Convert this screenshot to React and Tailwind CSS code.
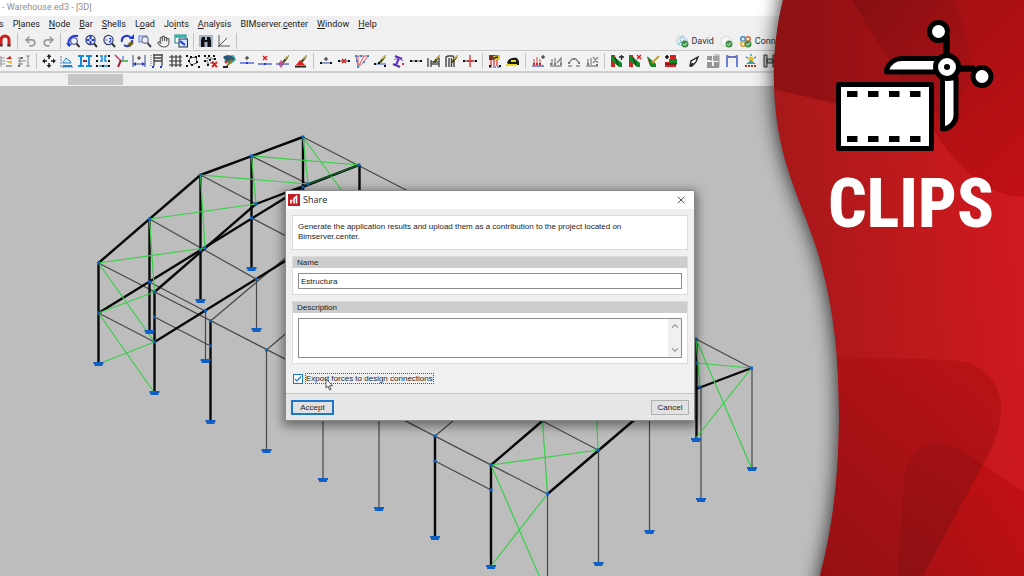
import React from 'react';
import { ChevronDown, ChevronUp, Hand, Redo2, Undo2, X } from 'lucide-react';

const MENU = [
  ['', '', 's'],
  ['P', 'l', 'anes'],
  ['', 'N', 'ode'],
  ['', 'B', 'ar'],
  ['', 'S', 'hells'],
  ['L', 'o', 'ad'],
  ['Jo', 'i', 'nts'],
  ['', 'A', 'nalysis'],
  ['BIMserver.', 'c', 'enter'],
  ['', 'W', 'indow'],
  ['', 'H', 'elp'],
];

// Small reusable bits of the toolbar drawings
const Pencil = () => (
  <>
    <path d="M6 8L10 3L13 1L12 4L8 9Z" fill="#3f4a14" />
    <path d="M9 5L12 2" stroke="#d8c060" strokeWidth="1.4" />
  </>
);
const Cross = ({ x, y }) => (
  <path d={`M${x} ${y}l4 4m0 -4l-4 4`} stroke="#e01818" strokeWidth="1.4" />
);
const Dots = ({ points, color = '#111' }) =>
  points.map(([x, y]) => <rect key={`${x}-${y}`} x={x - 1} y={y - 1} width="2" height="2" fill={color} stroke="none" />);
const Lens = () => (
  <>
    <circle cx="6.5" cy="6" r="4.6" fill="#e8eefc" stroke="#333f66" strokeWidth="1.2" />
    <path d="M10 9.5L13 13" stroke="#333" strokeWidth="2" />
  </>
);

const ICONS = {
  magnet: (
    <>
      <path d="M3 12V6a4 4 0 0 1 8 0v6" stroke="#d01c1c" strokeWidth="3" />
      <path d="M1.5 11.5h3M9.5 11.5h3" stroke="#333" strokeWidth="2" />
    </>
  ),
  zoomPrev: (
    <>
      <path d="M3 12C1 4 6 1 12 2" stroke="#2238d8" strokeWidth="2" />
      <circle cx="8" cy="7" r="3.4" fill="#e8eefc" stroke="#333f66" />
      <path d="M10.5 9.5L13.5 13" stroke="#333" strokeWidth="2" />
      <path d="M0 9l3 4 3-3z" fill="#2238d8" />
    </>
  ),
  zoomAll: (
    <>
      <Lens />
      <path d="M6.5 2v3M6.5 7v3M2.5 6h3M7.5 6h3" stroke="#2238d8" strokeWidth="2" />
    </>
  ),
  zoomTwo: (
    <>
      <Lens />
      <path d="M3.5 6h2M7 4.5h2V6L7 8h2.5" stroke="#2238d8" />
    </>
  ),
  redraw: (
    <>
      <path d="M2 8a5 5 0 0 1 9-4M12 6a5 5 0 0 1-8 5" stroke="#2238d8" strokeWidth="2" />
      <path d="M9 5h5V0z" fill="#2238d8" />
      <path d="M7 11l4-4 3 2-4 4z" fill="#70641c" />
    </>
  ),
  zoomWin: (
    <>
      <rect x="1" y="2" width="8" height="6" fill="#dce6ff" stroke="#5878d8" />
      <circle cx="7" cy="6" r="3.4" fill="#e8eefc" stroke="#556" />
      <path d="M9.5 9L13 13" stroke="#445" strokeWidth="2" />
    </>
  ),
  windows: (
    <>
      <rect x="1" y="1" width="11" height="8" fill="#fff" stroke="#168080" />
      <path d="M1 2.5h11" stroke="#20b0b0" strokeWidth="2.5" />
      <rect x="5" y="5" width="8.5" height="8" fill="#cfe4ff" stroke="#234" />
      <path d="M6 7l5 4" stroke="#2238d8" strokeWidth="2" />
    </>
  ),
  binoculars: (
    <>
      <rect x="0" y="1" width="14" height="12" fill="#a8b4c8" />
      <path d="M2 13V6l1-3h3v3h2V3h3l1 3v7H8.5V8h-3v5z" fill="#111" />
    </>
  ),
  angle: <path d="M2 1v12M1 12h12M2 12L10 4" stroke="#555" />,
  layersRed: (
    <>
      <path d="M0 4h6M0 7h6M0 10h6M2 2v11" stroke="#999" />
      <path d="M7 5l4-3 2 3z" fill="#e02020" />
      <path d="M6 7h7v3l-3-1z" fill="#f0c020" />
      <path d="M7 12h6" stroke="#555" />
    </>
  ),
  layersGray: (
    <>
      <path d="M1 4h5M1 7h5M1 10h5M3 3v9M6 7h3M9 2h4M9 12h4M11 2v10" stroke="#888" />
      <Dots points={[[2, 12], [5, 4]]} color="#666" />
    </>
  ),
  move: (
    <>
      <path d="M7 3v2M7 9v2M3 7h2M9 7h2" stroke="#222" strokeWidth="1.6" />
      <path d="M7 0l2.5 3h-5zM7 14l2.5-3h-5zM0 7l3-2.5v5zM14 7l-3-2.5v5z" fill="#222" />
    </>
  ),
  section1: (
    <>
      <path d="M1 2v11h12" stroke="#5b7ba8" strokeDasharray="2 1" />
      <path d="M3 9c0-3 2-2 3-5 1 2 5 2 5 5z" fill="#d8eefa" stroke="#2080c8" />
      <path d="M3 12h9" stroke="#2080c8" strokeWidth="2" />
    </>
  ),
  section2: (
    <>
      <path d="M0 2h6M0 12h6M3 2v10M8 2h6M8 12h6M11 2v10" stroke="#168cd8" strokeWidth="2" />
      <path d="M5 7h4" stroke="#2238b8" strokeWidth="2" />
      <Dots points={[[7, 7]]} color="#d02020" />
    </>
  ),
  section3: (
    <>
      <path d="M4 2h2v5H4M11 2H9v5h2M3 12h9" stroke="#168cd8" strokeWidth="1.5" />
      <Dots points={[[1, 2], [1, 7], [1, 12], [13, 2], [13, 7], [13, 12], [7, 12]]} />
    </>
  ),
  axes: (
    <>
      <path d="M1 1l6 6" stroke="#d04060" strokeWidth="1.5" />
      <path d="M6 7h8" stroke="#30a840" strokeWidth="1.5" />
      <path d="M7 6L4 13" stroke="#a02838" strokeWidth="2" />
      <path d="M9 2v4" stroke="#4058d8" />
    </>
  ),
  dimension: (
    <>
      <path d="M1 1v12M13 1v12M1 10h12" stroke="#384880" />
      <path d="M5 4h4M7 2v4" stroke="#333" />
      <path d="M1 10l3-2v4zM13 10l-3-2v4z" fill="#2238d8" />
    </>
  ),
  frame: (
    <>
      <path d="M3 1h10M4 1v11M12 1v11M4 4h8M4 7h8" stroke="#444" strokeWidth="1.3" />
      <Dots points={[[3, 13], [11, 13]]} color="#2238d8" />
      <path d="M1 1v11" stroke="#777" strokeDasharray="1 1" />
    </>
  ),
  grid: <path d="M4 1v12M8 1v12M12 1v12M1 3h13M1 7h13M1 11h13" stroke="#333" strokeWidth="1.2" />,
  nodesA: (
    <>
      <path d="M4 4l6-1 1 6-6 2-2-4z" stroke="#555" />
      <Dots points={[[1, 2], [5, 3], [10, 3], [13, 2], [3, 7], [11, 8], [1, 12], [6, 11], [13, 13]]} />
    </>
  ),
  nodesX: (
    <>
      <path d="M3 4h6v5H3z" stroke="#555" strokeDasharray="2 1" />
      <Dots points={[[1, 2], [5, 2], [10, 2], [1, 7], [6, 6], [11, 5], [4, 11]]} />
      <path d="M8 8l5 5m0-5l-5 5" stroke="#e01818" strokeWidth="1.8" />
    </>
  ),
  globe: (
    <>
      <path d="M2 2l10-1 2 5-5 4-6-2z" fill="#40b8a8" />
      <path d="M1 3c4-3 9-2 12 2l-4 3-5-1z" fill="#2c5878" />
      <path d="M4 12l5-7 2 2-6 6z" fill="#8a7c20" />
      <circle cx="4" cy="8" r="1.5" fill="#d03030" />
      <path d="M1 13h5" stroke="#222" strokeWidth="2" />
    </>
  ),
  barNode: (
    <>
      <path d="M0 9h14" stroke="#4864d8" strokeWidth="1.4" />
      <path d="M5 4h4M7 2v4" stroke="#222" />
      <Dots points={[[7, 9]]} color="#2238d8" />
    </>
  ),
  barNodeX: (
    <>
      <path d="M0 10h14" stroke="#4864d8" strokeWidth="1.4" />
      <Cross x={5} y={2} />
      <Dots points={[[7, 10]]} color="#2238d8" />
    </>
  ),
  barNodeEdit: (
    <>
      <path d="M0 10h13" stroke="#4864d8" strokeWidth="1.4" />
      <Pencil />
      <circle cx="5" cy="10" r="2" stroke="#c03080" />
      <path d="M5 6v8" stroke="#c03080" />
    </>
  ),
  support: (
    <>
      <Pencil />
      <path d="M6 6l5 5H2z" fill="#e02020" />
      <path d="M1 12.5h11" stroke="#222" strokeWidth="2" />
    </>
  ),
  barAdd: (
    <>
      <path d="M1 9h12" stroke="#2c50b8" />
      <path d="M5 5h4M7 3v4" stroke="#222" />
      <Dots points={[[2, 9], [12, 9]]} />
    </>
  ),
  barDel: (
    <>
      <path d="M1 7h12" stroke="#444" />
      <Cross x={5} y={5} />
      <Dots points={[[2, 7], [12, 7]]} />
    </>
  ),
  truss: (
    <>
      <path d="M1 2h12L8 9 3 13z M3 2v11M3 13l6-11" stroke="#e05868" />
      <Dots points={[[1, 2], [6, 2], [13, 2], [2, 7], [9, 8], [3, 13]]} color="#2890e0" />
    </>
  ),
  barEdit: (
    <>
      <path d="M1 10h12" stroke="#2c50b8" />
      <Pencil />
      <Dots points={[[2, 10], [12, 12], [6, 9]]} />
    </>
  ),
  rotate: (
    <>
      <path d="M4 2l7 3M2 10l7 3M8 4L5 11" stroke="#5a30b0" strokeWidth="2" />
      <path d="M3 6c2-2 6-2 9 1" stroke="#8a50d0" />
      <Dots points={[[12, 10]]} color="#d83060" />
    </>
  ),
  bar: (
    <>
      <path d="M1 7h12" stroke="#444" />
      <Dots points={[[2, 7], [7, 7], [12, 7]]} />
    </>
  ),
  hall: (
    <>
      <path d="M1 4v9M4 6v7M12 4v9M4 8h8M4 10h8" stroke="#555" strokeWidth="1.5" />
      <Pencil />
    </>
  ),
  arches: (
    <>
      <path d="M1 13V3l2-1h5l1 2v9M4 13V4M6.5 13V4" stroke="#444" strokeWidth="1.4" />
      <Pencil />
    </>
  ),
  split: (
    <>
      <path d="M0 7h14" stroke="#333" />
      <path d="M7 1v12M4 7h6" stroke="#e03030" strokeWidth="1.3" />
      <Dots points={[[1, 7], [13, 7]]} />
    </>
  ),
  loadFrame: (
    <>
      <rect x="1" y="1" width="10" height="5" fill="#7a3028" />
      <path d="M5 2l7-1v4L7 7z" fill="#d8d028" />
      <path d="M6 4l4-1" stroke="#222" strokeWidth="1.5" />
      <path d="M3 6v6M6 6v6M9 6v6" stroke="#e03838" strokeWidth="1.3" />
      <path d="M1 13h12" stroke="#2c3c98" strokeDasharray="3 1" />
      <Dots points={[[2, 12], [12, 12]]} />
    </>
  ),
  helmet: (
    <>
      <path d="M1 9c1-5 6-6 10-5l2 3v4H4z" fill="#181818" />
      <path d="M0 10h11v2H0zM5 6h5v2H5z" fill="#e8d820" />
    </>
  ),
  loadAdd: (
    <>
      <path d="M1 12h12" stroke="#5068d0" strokeWidth="1.5" />
      <path d="M3 5v6M6 3v8M9 5v6" stroke="#e04040" />
      <path d="M10 3h4M12 1v4" stroke="#222" />
      <Dots points={[[3, 10], [6, 10], [9, 10]]} color="#d02020" />
    </>
  ),
  loadEdit: (
    <>
      <path d="M1 12h12M3 5v6M6 4v7M8 9l4-5v7" stroke="#8a8a8a" strokeWidth="1.3" />
      <Dots points={[[2, 10], [6, 10], [12, 10]]} color="#777" />
    </>
  ),
  loadMove: (
    <>
      <path d="M1 12h4M9 12h4M2 9l3-4h4l3 4" stroke="#8a8a8a" strokeWidth="1.3" />
      <Dots points={[[2, 9], [12, 9], [7, 5]]} color="#777" />
    </>
  ),
  loadDel: (
    <>
      <path d="M1 12h12M3 5v6M6 4v7M8 3l5 6M13 3l-5 6" stroke="#8a8a8a" strokeWidth="1.3" />
      <Dots points={[[3, 10], [12, 11]]} color="#777" />
    </>
  ),
  jointAdd: (
    <>
      <path d="M1 1h4v12H1z" fill="#d82020" />
      <path d="M2 1l10 8v4H9L2 7z" fill="#108828" />
      <path d="M5 3l3 8" stroke="#222" />
      <path d="M9 3h5M11.5 1v5" stroke="#222" strokeWidth="1.3" />
    </>
  ),
  jointDel: (
    <>
      <path d="M1 1h4v12H1z" fill="#d82020" />
      <path d="M2 1l10 8v4H9L2 7z" fill="#108828" />
      <path d="M5 3l3 8" stroke="#222" />
      <Cross x={9} y={1} />
    </>
  ),
  jointCheck: (
    <>
      <path d="M1 3l3 9h5v-3z" fill="#d82020" />
      <path d="M1 2l9 8v3H5z" fill="#108828" />
      <path d="M6 9l7-7" stroke="#c8a028" strokeWidth="2" />
    </>
  ),
  jointGroup: (
    <>
      <path d="M6 1h6v12H6z" fill="#d82020" />
      <path d="M1 8h7v5H1z" fill="#d82020" />
      <path d="M5 5h8v5H5z" fill="#108828" />
      <path d="M1 3h4M3 1v4" stroke="#111" strokeWidth="1.6" />
      <path d="M1 10h12" stroke="#222" />
    </>
  ),
  plate: <path d="M3 12l1-5 7-4-2 5-4 4zM3 12l3-3" fill="#fff" stroke="#222" strokeWidth="1.3" />,
  sheets: (
    <>
      <path d="M1 3h5M8 2v5M10 2v5M12 2v5M1 5h5M1 9h5M1 11h5M8 9h5M8 11h5M1 13h12" stroke="#777" strokeWidth="1.3" />
      <path d="M5 3v4M8 1h5v12" stroke="#999" />
    </>
  ),
  portal: (
    <>
      <path d="M2 13V3h10v10" stroke="#3850d8" strokeWidth="1.4" />
      <path d="M1 1l4 2M9 3l4-2" stroke="#666" />
    </>
  ),
  sun: (
    <>
      <circle cx="7" cy="5" r="2.5" fill="#f0b820" />
      <path d="M7 0v2M2 3l2 1M12 3l-2 1" stroke="#30a0c8" strokeWidth="1.5" />
      <path d="M2 10l5-4 5 4z" fill="#40a0a0" />
      <path d="M1 12h12" stroke="#8a4020" strokeWidth="2" strokeDasharray="2 1" />
    </>
  ),
  beam: <path d="M1 1h3v12H1zM10 1h3v12h-3zM4 5h6v4H4z" fill="#bbb" stroke="#333" />,
};

const TOP_TOOLS = [
  'magnet', '|', 'undo', 'redo', '|', 'zoomPrev', 'zoomAll', 'zoomTwo', 'redraw', 'zoomWin', 'hand', 'windows',
  '|', 'binoculars', 'angle', '|',
];
const MODEL_TOOLS = [
  'layersRed', 'layersGray', '|', 'move', 'section1', 'section2', 'section3', 'axes', 'dimension', 'frame', 'grid',
  'nodesA', 'nodesX', 'globe', 'barNode', 'barNodeX', 'barNodeEdit', 'support', '|', 'barAdd', 'barDel', 'truss',
  'barEdit', 'rotate', 'bar', 'hall', 'arches', 'split', '|', 'loadFrame', 'helmet', '|', 'loadAdd', 'loadEdit',
  'loadMove', 'loadDel', '|', 'jointAdd', 'jointDel', 'jointCheck', 'jointGroup',
];
const RESULT_TOOLS = ['plate', 'sheets', 'portal', 'sun', 'beam'];

const LUCIDE = { undo: Undo2, redo: Redo2, hand: Hand };

const ToolIcon = ({ name }) => {
  const Lucide = LUCIDE[name];
  if (Lucide) return <Lucide size={13} strokeWidth={name === 'hand' ? 2 : 3} color={name === 'hand' ? '#555' : '#9a9a9a'} />;
  return (
    <svg viewBox="0 0 14 14" className="w-[14px] h-[14px]" fill="none">
      {ICONS[name]}
    </svg>
  );
};

const Tools = ({ items }) =>
  items.map((name, i) =>
    name === '|' ? (
      <span key={i} className="w-[7px] h-4 flex justify-center shrink-0">
        <span className="w-px h-full bg-[#c4c4c4]" />
      </span>
    ) : (
      <button key={i} type="button" aria-label={name} className="w-[18px] h-[18px] shrink-0 flex items-center justify-center">
        <ToolIcon name={name} />
      </button>
    )
  );

const CheckBadge = () => (
  <>
    <circle cx="9" cy="9" r="3.5" fill="#3f8f48" />
    <path d="M7.2 9l1.3 1.3 2.3-2.5" stroke="#fff" />
  </>
);

const UserStatus = () => (
  <div className="ml-auto pr-[226px] flex items-center text-[9px] leading-3 text-[#333]">
    <svg viewBox="0 0 13 13" className="w-[13px] h-[13px]" fill="none">
      <circle cx="6" cy="6" r="5" fill="#e4f2fa" stroke="#a8cce0" />
      <circle cx="6" cy="4.5" r="2" fill="#fff" stroke="#88b4cc" />
      <path d="M2.5 9.5c1-3 6-3 7 0" stroke="#60b0c8" />
      <CheckBadge />
    </svg>
    <span className="ml-[2px]">David</span>
    <svg viewBox="0 0 13 13" className="ml-[6px] w-[13px] h-[13px]" fill="none">
      <path d="M1 4l5-3 5 3v5l-5 3-5-3z" fill="#f8f8f8" stroke="#d4dcd4" />
      <CheckBadge />
    </svg>
    <svg viewBox="0 0 13 13" className="ml-[6px] w-[13px] h-[13px]" fill="none">
      <circle cx="4" cy="4" r="2.3" stroke="#3890d0" strokeWidth="1.5" />
      <circle cx="9" cy="4" r="2.3" stroke="#e06838" strokeWidth="1.5" />
      <circle cx="4" cy="9" r="2.3" stroke="#e0a028" strokeWidth="1.5" />
      <CheckBadge />
    </svg>
    <span className="ml-[3px]">Connected</span>
  </div>
);

// Structure geometry, [x1, y1, x2, y2]
const HEAVY = [
  [98.5, 263, 200.5, 175], [200.5, 175, 303, 137], [154.5, 292, 256, 204], [256, 204, 359, 165],
  [98.5, 313, 303, 187], [303, 187, 359, 165], [154.5, 342, 290, 258],
  [98.5, 263, 98.5, 364], [149.5, 219, 149.5, 332], [200.5, 175, 200.5, 300], [251.5, 156, 251.5, 268],
  [303, 137, 303, 237], [359.5, 165, 359.5, 220], [154.5, 292, 154.5, 393], [210.5, 321, 210.5, 421],
  [435, 436, 435, 537], [491, 465, 491, 566], [491, 465, 547, 417], [547.5, 494, 640, 415],
  [696.5, 339, 696.5, 439], [696, 389, 751.5, 368],
];
const LIGHT = [
  [98.5, 263, 547.5, 494], [149.5, 282, 205, 311], [98.5, 313, 154.5, 342], [154.5, 317, 210.5, 346],
  [149.5, 219, 256, 279], [251.5, 218, 290, 238], [200.5, 175, 256, 204], [251.5, 156, 308, 184],
  [303, 137, 410, 192], [205.5, 311, 205.5, 361], [256.5, 279, 256.5, 329], [210.5, 321, 290, 254],
  [266.5, 350, 290, 330], [266.5, 350, 266.5, 451], [323, 400, 323, 480], [379, 400, 379, 508],
  [435, 436, 460, 415], [435, 461, 491, 490], [547.5, 494, 547.5, 576], [542.5, 421, 598, 450],
  [598.5, 450, 598.5, 563], [649.5, 400, 649.5, 531], [696, 339, 751.5, 368], [701, 387, 701, 499],
  [752, 368, 752, 468],
];
const BRACES = [
  [98.5, 263, 205, 248], [149.5, 219, 256, 204], [200.5, 175, 308, 184], [251.5, 156, 359, 165],
  [149.5, 219, 154.5, 292], [200.5, 175, 205, 248], [251.5, 156, 256, 204], [303, 137, 308, 184],
  [303, 137, 350, 202], [98.5, 263, 154.5, 342], [98.5, 313, 154.5, 292], [98.5, 313, 154.5, 393],
  [98.5, 364, 154.5, 342], [491, 465, 598, 450], [542.5, 421, 547.5, 494], [596, 400, 598, 450],
  [542.5, 421, 560, 419], [491, 465, 541, 580], [547.5, 494, 491, 566], [696, 363, 751.5, 368],
  [696, 339, 751.5, 468], [751.5, 368, 696, 438], [696, 339, 700, 387],
];
const JOINTS = [
  [98.5, 263], [149.5, 219], [200.5, 175], [251.5, 156], [303, 137], [359, 165], [308, 184], [303, 187],
  [256, 204], [251.5, 218], [205, 248], [200.5, 250], [154.5, 292], [149.5, 282], [98.5, 313], [154.5, 317],
  [154.5, 342], [205.5, 311], [210.5, 321], [210.5, 346], [256.5, 279], [266.5, 350], [435, 436], [435, 461],
  [491, 465], [491, 490], [547.5, 494], [542.5, 421], [598, 450], [696, 339], [696, 363], [700, 387], [751.5, 368],
];
const FOOTINGS = [
  [98.5, 364], [149.5, 332], [200.5, 301], [251.5, 269], [154.5, 393], [205.5, 361], [256.5, 330], [210.5, 422],
  [266.5, 451], [323, 480], [379, 509], [435, 538], [491, 567], [598.5, 564], [649.5, 532], [701, 500],
  [752, 469], [696, 440],
];

const Lines = ({ data, ...props }) => (
  <g {...props}>
    {data.map(([x1, y1, x2, y2], i) => (
      <line key={i} x1={x1} y1={y1} x2={x2} y2={y2} />
    ))}
  </g>
);

const StructureModel = () => (
  <svg viewBox="0 86 1024 490" className="absolute left-0 top-0 w-[1024px] h-[490px]" fill="none">
    <Lines data={LIGHT} stroke="#484848" strokeWidth="1.2" />
    <Lines data={HEAVY} stroke="#080808" strokeWidth="2.4" />
    <Lines data={BRACES} stroke="#38d048" strokeWidth="1.2" />
    <line x1="308" y1="184" x2="359" y2="165" stroke="#186028" strokeWidth="1.5" />
    {JOINTS.map(([x, y], i) => (
      <rect key={i} x={x - 1.5} y={y - 1.5} width="3" height="3" fill="#1060c0" />
    ))}
    {FOOTINGS.map(([x, y], i) => (
      <g key={i} fill="#0c60c8">
        <rect x={x - 5} y={y - 2} width="10" height="2" />
        <rect x={x - 4} y={y} width="8" height="2" />
      </g>
    ))}
  </svg>
);

const Group = ({ title, htmlFor, children }) => (
  <section className="border border-[#dcdcdc] bg-white">
    <label htmlFor={htmlFor} className="block h-[11px] pl-1 bg-[#cdcdcd] text-[8px] leading-[11px]">
      {title}
    </label>
    <div className="p-[5px]">{children}</div>
  </section>
);

const ShareDialog = () => (
  <div
    role="dialog"
    aria-label="Share"
    className="absolute left-[285px] top-[104px] w-[410px] border border-[#8a8a8a] bg-[#f0f0f0] font-['Liberation_Sans',sans-serif] text-[8px] text-[#1c1c1c] shadow-[0_3px_10px_2px_rgba(0,0,0,0.45)]"
  >
    <header className="h-[18px] px-[2px] flex items-center bg-white">
      <svg viewBox="0 0 12 12" className="w-3 h-3" fill="none">
        <rect width="12" height="12" fill="#c41c24" />
        <path d="M3 9.5V6.5h1.5M6 9.5V4.5l2.5-2v7" stroke="#fff" strokeWidth="1.6" />
      </svg>
      <h2 className="ml-[3px] font-['Open_Sans',sans-serif] text-[9px] leading-3">Share</h2>
      <button type="button" aria-label="Close" className="ml-auto mr-[5px]">
        <X size={12} strokeWidth={2} color="#555" />
      </button>
    </header>

    <div className="px-[6px] pt-[6px] pb-[9px] flex flex-col gap-[6px]">
      <p className="h-[35px] px-[5px] pt-[6px] border border-[#dcdcdc] bg-white leading-[10px]">
        Generate the application results and upload them as a contribution to the project located on
        <br />
        Bimserver.center.
      </p>
      <Group title="Name" htmlFor="share-name">
        <input
          id="share-name"
          defaultValue="Estructura"
          className="block w-full h-4 px-[2px] border border-[#8c8c8c] bg-white text-[8px] leading-3 outline-none"
        />
      </Group>
      <Group title="Description" htmlFor="share-description">
        <div className="flex h-10 border border-[#8c8c8c]">
          <textarea id="share-description" className="flex-1 resize-none bg-white px-[2px] outline-none" />
          <div className="w-[13px] py-[2px] flex flex-col items-center justify-between bg-[#f0f0f0]">
            <ChevronUp size={10} color="#a0a0a0" strokeWidth={3} />
            <ChevronDown size={10} color="#a0a0a0" strokeWidth={3} />
          </div>
        </div>
      </Group>
      <div className="relative mt-[3px] pl-px flex items-center">
        <span className="grid">
          <input
            id="share-forces"
            type="checkbox"
            defaultChecked
            className="col-start-1 row-start-1 appearance-none w-[10px] h-[10px] border border-[#1a78d0] bg-white"
          />
          <svg viewBox="0 0 10 10" className="pointer-events-none col-start-1 row-start-1 w-[10px] h-[10px]" fill="none">
            <path d="M2 5l2 2 4-4.5" stroke="#1a78d0" strokeWidth="1.2" />
          </svg>
        </span>
        <label htmlFor="share-forces" className="ml-[2px] h-[11px] border border-dotted border-[#555] leading-[9px]">
          Export forces to design connections
        </label>
        <svg viewBox="0 0 8 13" className="absolute left-[33px] top-[5px] w-2 h-[13px]">
          <path d="M1 1v9l2-2 1.5 4 1.5-.6-1.5-3.7H7.5z" fill="#fff" stroke="#333" strokeWidth=".8" />
        </svg>
      </div>
    </div>

    <footer className="h-[27px] px-[5px] flex items-center justify-between border-t border-[#c4c4c4] bg-[#e6e6e6]">
      <button type="button" className="w-[43px] h-[15px] border-2 border-[#1a78d0] bg-[#e1e1e1] leading-[11px]">
        Accept
      </button>
      <button type="button" className="w-[38px] h-[15px] border border-[#b0b0b0] bg-[#e1e1e1] leading-[13px]">
        Cancel
      </button>
    </footer>
  </div>
);

const ClipsLogo = () => (
  <svg viewBox="834 18 162 136" className="w-[162px] h-[136px]" fill="#fff" stroke="#000" strokeWidth="5">
    <path d="M946.5 36v24M957 68.5h18" strokeWidth="6.5" />
    <circle cx="938.5" cy="31.5" r="9" />
    <circle cx="982" cy="76.5" r="9" />
    <path d="M886.5 72V70C889 63 895 58.5 902 58.5H938V72Z" strokeLinejoin="round" />
    <path d="M942.5 78H956V116C956 122 950 128.5 944 129H942.5Z" strokeLinejoin="round" />
    <circle cx="947" cy="67" r="11.5" />
    <circle cx="947" cy="67" r="3" fill="#000" stroke="none" />
    <rect x="838.5" y="84.5" width="93" height="64" strokeLinejoin="round" />
    <g fill="#000" stroke="none">
      {[847, 868, 889, 910].map((x) => (
        <React.Fragment key={x}>
          <rect x={x} y="91" width="10.5" height="6" />
          <rect x={x} y="136" width="10.5" height="6" />
        </React.Fragment>
      ))}
    </g>
  </svg>
);

const BRAND_EDGE =
  'M783 -20V0C771 50 770 105 785 160C795 195 810 225 820 260C834 310 839 360 839 415C839 480 832 530 820 576V600H1044V-20Z';
const TOP_BLOB = 'M760 86L880 114C940 126 975 100 970 60C967 35 961 18 955 0H760Z';
const CORNER = 'M852 0C878 45 908 88 935 132C960 170 985 195 1024 197V0Z';
const LOW_BLOB = 'M820 356L950 360C985 361 1003 385 1001 412C1000 435 990 452 980 470L923 576H820Z';
const LOW_RIGHT = 'M897 576L904 485C904 445 935 433 965 452L1024 492V576Z';

const BrandPanel = () => (
  <aside className="absolute right-0 top-0 h-full w-[284px] overflow-hidden pointer-events-none">
    <svg viewBox="740 0 284 576" preserveAspectRatio="none" className="absolute inset-0 w-full h-full">
      <defs>
        <linearGradient id="base" gradientUnits="userSpaceOnUse" x1="774" y1="300" x2="1024" y2="280">
          <stop offset="0" stopColor="#a51819" />
          <stop offset="1" stopColor="#d01a1f" />
        </linearGradient>
        <linearGradient id="top" gradientUnits="userSpaceOnUse" x1="774" y1="60" x2="1024" y2="60">
          <stop offset="0" stopColor="#8d1113" />
          <stop offset="1" stopColor="#b51216" />
        </linearGradient>
        <linearGradient id="corner" gradientUnits="userSpaceOnUse" x1="852" y1="0" x2="1024" y2="190">
          <stop offset="0" stopColor="#9c1012" />
          <stop offset="1" stopColor="#c01016" />
        </linearGradient>
        <linearGradient id="low" gradientUnits="userSpaceOnUse" x1="830" y1="576" x2="1000" y2="380">
          <stop offset="0" stopColor="#961012" />
          <stop offset="1" stopColor="#b81317" />
        </linearGradient>
        <linearGradient id="lowRight" gradientUnits="userSpaceOnUse" x1="900" y1="576" x2="1024" y2="500">
          <stop offset="0" stopColor="#a41113" />
          <stop offset="1" stopColor="#c01014" />
        </linearGradient>
        <linearGradient id="topMix" gradientUnits="userSpaceOnUse" x1="852" y1="0" x2="975" y2="90">
          <stop offset="0" stopColor="#860f11" />
          <stop offset="1" stopColor="#a81114" />
        </linearGradient>
        <linearGradient id="lowMix" gradientUnits="userSpaceOnUse" x1="900" y1="576" x2="970" y2="450">
          <stop offset="0" stopColor="#8f1012" />
          <stop offset="1" stopColor="#a31013" />
        </linearGradient>
        <clipPath id="edge">
          <path d={BRAND_EDGE} />
        </clipPath>
        <clipPath id="cornerClip">
          <path d={CORNER} />
        </clipPath>
        <clipPath id="lowClip">
          <path d={LOW_BLOB} />
        </clipPath>
        <filter id="shade" x="-30%" y="-10%" width="160%" height="120%">
          <feGaussianBlur stdDeviation="10" />
        </filter>
      </defs>
      <path d={BRAND_EDGE} fill="#000" fillOpacity=".85" filter="url(#shade)" />
      <g clipPath="url(#edge)">
        <rect x="740" width="284" height="576" fill="url(#base)" />
        <path d={TOP_BLOB} fill="url(#top)" />
        <path d={CORNER} fill="url(#corner)" />
        <path d={TOP_BLOB} fill="url(#topMix)" clipPath="url(#cornerClip)" />
        <path d={LOW_BLOB} fill="url(#low)" />
        <path d={LOW_RIGHT} fill="url(#lowRight)" />
        <path d={LOW_RIGHT} fill="url(#lowMix)" clipPath="url(#lowClip)" />
      </g>
    </svg>
    <div className="relative ml-auto w-[226px] pt-[18px] flex flex-col items-center">
      <div className="pl-2">
        <ClipsLogo />
      </div>
      <p className="mt-[14px] font-['Liberation_Sans_Narrow','Roboto_Condensed',Roboto,sans-serif] font-extrabold text-[68px] leading-[72px] text-white">
        CLIPS
      </p>
    </div>
  </aside>
);

export default function App() {
  return (
    <div className="relative min-h-screen flex flex-col overflow-hidden bg-[#bdbdbd] font-[Roboto,sans-serif] text-[#222]">
      <div className="h-4 pl-[2px] bg-white text-[9px] leading-[15px] text-[#909090]">- Warehouse.ed3 - [3D]</div>

      <nav className="h-4 -ml-px flex items-center gap-[9px] bg-[#f0f0f0] text-[9px] leading-[15px]">
        {MENU.map(([before, key, after]) => (
          <button key={before + key + after} type="button">
            {before}
            {key && <span className="underline">{key}</span>}
            {after}
          </button>
        ))}
      </nav>

      <div className="h-[19px] -ml-1 flex items-center bg-[#f0f0f0] border-b border-[#c8c8c8]">
        <Tools items={TOP_TOOLS} />
        <UserStatus />
      </div>

      <div className="h-[22px] -ml-[3px] flex items-center bg-[#f2f2f2] border-b-2 border-[#cfcfcf]">
        <Tools items={MODEL_TOOLS} />
        <div className="ml-[5px] flex gap-px">
          <Tools items={RESULT_TOOLS} />
        </div>
      </div>

      <div className="h-[13px] pt-px pl-[68px] bg-[#f0f0f0]">
        <div className="w-[55px] h-[11px] bg-[#c6c6c6]" />
      </div>

      <main className="relative flex-1 min-h-[490px] overflow-hidden">
        <StructureModel />
        <ShareDialog />
      </main>

      <BrandPanel />
    </div>
  );
}
